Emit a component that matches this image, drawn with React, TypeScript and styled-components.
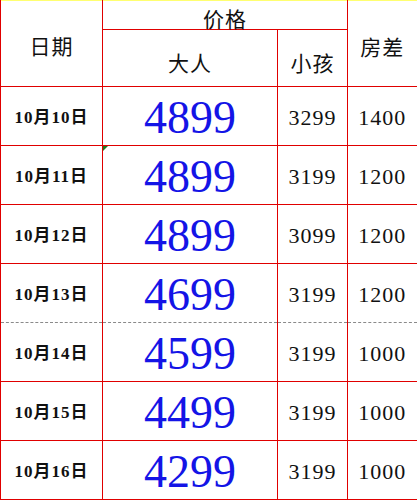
import React from "react";
import styled, { createGlobalStyle } from "styled-components";

const Global = createGlobalStyle`
  html, body { margin: 0; padding: 0; background: #ffffff; }
  body { font-family: "Liberation Serif", "Noto Sans CJK SC", serif; }
  td, th { box-sizing: border-box; }
`;

const Sheet = styled.div`
  width: 417px;
  height: 502px;
  background: #ffffff;
  overflow: hidden;
`;

const Table = styled.table`
  border-collapse: collapse;
  table-layout: fixed;
  width: 417px;
  border-top: 1px solid #ffff70;
  border-right: 2px solid #e00000;
`;

const HeadRow = styled.tr<{ $h: number }>`
  height: ${(p) => p.$h}px;
`;

const HeadCell = styled.th<{ $pt?: number }>`
  padding: ${(p) => p.$pt ?? 0}px 0 0 0;
  border: 1px solid #e00000;
  border-top: none;
  font-family: "Noto Sans CJK SC", sans-serif;
  font-weight: 400;
  font-size: 21px;
  letter-spacing: 1px;
  color: #111111;
  text-align: center;
  vertical-align: middle;
  line-height: 1;
`;

const Row = styled.tr<{ $dashedTop?: boolean; $dashedBottom?: boolean }>`
  height: 59px;
  td {
    border-top: ${(p) => (p.$dashedTop ? "1px dashed #8a8a8a" : "1px solid #e00000")};
    border-bottom: ${(p) => (p.$dashedBottom ? "1px dashed #8a8a8a" : "1px solid #e00000")};
  }
`;

const DateCell = styled.td`
  position: relative;
  border: 1px solid #e00000;
  padding: 2px 0 0 0;
  text-align: center;
  vertical-align: middle;
  font-family: "Liberation Serif", "Noto Sans CJK SC", serif;
  font-weight: 700;
  font-size: 17px;
  letter-spacing: 1px;
  line-height: 1;
  color: #111111;
`;

const BigPrice = styled.td`
  position: relative;
  border: 1px solid #e00000;
  padding: 4px 0 0 0;
  text-align: center;
  vertical-align: middle;
  font-family: "Liberation Serif", serif;
  font-size: 46px;
  line-height: 1;
  color: #1414e6;
`;

const SmallNum = styled.td`
  border: 1px solid #e00000;
  padding: 3px 0 0 0;
  text-align: center;
  vertical-align: middle;
  font-family: "Liberation Serif", serif;
  font-size: 22px;
  letter-spacing: 1px;
  line-height: 1;
  color: #111111;
`;

const Marker = styled.span`
  position: absolute;
  left: 0;
  top: 0;
  width: 0;
  height: 0;
  border-top: 5px solid #1f7a1f;
  border-right: 5px solid transparent;
`;

const rows = [
  { d: "10月10日", a: "4899", c: "3299", r: "1400" },
  { d: "10月11日", a: "4899", c: "3199", r: "1200" },
  { d: "10月12日", a: "4899", c: "3099", r: "1200" },
  { d: "10月13日", a: "4699", c: "3199", r: "1200" },
  { d: "10月14日", a: "4599", c: "3199", r: "1000" },
  { d: "10月15日", a: "4499", c: "3199", r: "1000" },
  { d: "10月16日", a: "4299", c: "3199", r: "1000" },
];

export default function App() {
  return (
    <Sheet>
      <Global />
      <Table>
        <colgroup>
          <col style={{ width: 102 }} />
          <col style={{ width: 175 }} />
          <col style={{ width: 70 }} />
          <col style={{ width: 70 }} />
        </colgroup>
        <thead>
          <HeadRow $h={29}>
            <HeadCell rowSpan={2} $pt={4}>日期</HeadCell>
            <HeadCell colSpan={2} $pt={6}>价格</HeadCell>
            <HeadCell rowSpan={2} $pt={6}>房差</HeadCell>
          </HeadRow>
          <HeadRow $h={57}>
            <HeadCell $pt={8}>大人</HeadCell>
            <HeadCell $pt={8}>小孩</HeadCell>
          </HeadRow>
        </thead>
        <tbody>
          {rows.map((row, i) => (
            <Row key={row.d} $dashedTop={i === 4} $dashedBottom={i === 3}>
              <DateCell>{row.d}</DateCell>
              <BigPrice>
                {i === 1 && <Marker />}
                {row.a}
              </BigPrice>
              <SmallNum>{row.c}</SmallNum>
              <SmallNum>{row.r}</SmallNum>
            </Row>
          ))}
        </tbody>
      </Table>
    </Sheet>
  );
}
